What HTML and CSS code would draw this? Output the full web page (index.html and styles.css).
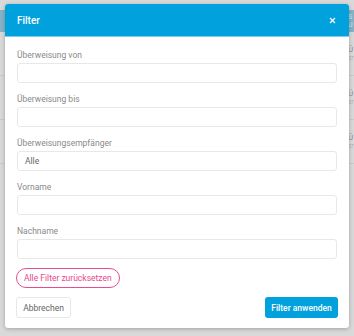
FILE: index.html
```html
<!DOCTYPE html>
<html lang="de">
<head>
<meta charset="utf-8">
<title>Filter</title>
<link rel="stylesheet" href="styles.css">
</head>
<body>
<div class="page">
  <div class="band"><span class="band-text">S<br>U</span></div>
  <div class="row"><span class="row-title">Ü</span><span class="row-sub">07</span></div>
  <div class="row"><span class="row-title">Ü</span><span class="row-sub">07</span></div>
  <div class="row"><span class="row-title">Ü</span><span class="row-sub">07</span></div>
</div>
<div class="modal">
  <div class="modal-header">
    <span class="modal-title">Filter</span>
    <svg class="close" width="7" height="7" viewBox="0 0 7 7"><path d="M1 1L6 6M6 1L1 6" stroke="#fff" stroke-width="1.2" fill="none"/></svg>
  </div>
  <div class="modal-body">
    <div class="field"><label class="label">Überweisung von</label><div class="input"></div></div>
    <div class="field"><label class="label">Überweisung bis</label><div class="input"></div></div>
    <div class="field"><label class="label">Überweisungsempfänger</label><div class="input">Alle</div></div>
    <div class="field"><label class="label">Vorname</label><div class="input"></div></div>
    <div class="field"><label class="label">Nachname</label><div class="input"></div></div>
    <button class="reset">Alle Filter zurücksetzen</button>
    <div class="footer">
      <button class="btn-cancel">Abbrechen</button>
      <button class="btn-apply">Filter anwenden</button>
    </div>
  </div>
</div>
</body>
</html>
```
FILE: styles.css
```css
html, body { margin: 0; padding: 0; }
body {
  width: 354px;
  height: 336px;
  overflow: hidden;
  background: #d9d9d9;
  font-family: Roboto, "Noto Sans", sans-serif;
  position: relative;
}
.page { padding-top: 10px; }
.band {
  height: 22px;
  background: #86b3c8;
  padding-left: 348px;
  box-sizing: border-box;
}
.band-text {
  display: block;
  font-size: 7px;
  line-height: 8px;
  color: #d6e6ee;
  padding-top: 3px;
  white-space: nowrap;
}
.row {
  height: 44px;
  border-bottom: 1px solid #cbcbcb;
  padding-left: 348px;
  padding-top: 13px;
  box-sizing: border-box;
  display: flex;
  flex-direction: column;
  white-space: nowrap;
}
.row-title { font-size: 8px; line-height: 9px; color: #8d8d8d; }
.row-sub { font-size: 5px; line-height: 8px; color: #a9a9a9; }

.modal {
  position: absolute;
  left: 5px;
  top: 4px;
  width: 344px;
  height: 324px;
  background: #fff;
  border-radius: 3px;
  box-shadow: 0 1px 4px rgba(0,0,0,0.25);
  overflow: hidden;
}
.modal-header {
  height: 33px;
  background: #00a1dd;
  display: flex;
  align-items: center;
  justify-content: space-between;
  padding: 0 12px 0 12px;
  box-sizing: border-box;
  border-bottom: 1px solid #7fd0ee;
}
.modal-title {
  color: #fff;
  font-size: 10px;
  font-weight: 500;
  padding-top: 1px;
}
.close { margin-right: 1px; margin-top: 1px; }
.modal-body {
  padding: 12px 12px 10px 12px;
}
.field { margin-bottom: 10px; }
.label {
  display: block;
  font-size: 8.5px;
  line-height: 12px;
  color: #8a8a8a;
  margin-bottom: 2px;
}
.input {
  height: 20px;
  border: 1px solid #e8e8e8;
  border-radius: 3px;
  box-sizing: border-box;
  font-size: 8.5px;
  line-height: 18px;
  color: #666;
  padding-left: 7px;
}
.reset {
  display: block;
  margin: -1px 0 0 -1px;
  height: 20px;
  padding: 0 7px;
  border: 1px solid #ea4b8f;
  border-radius: 10px;
  background: #fff;
  color: #e8468c;
  font-family: inherit;
  font-size: 8.5px;
  line-height: 18px;
}
.footer {
  display: flex;
  justify-content: space-between;
  margin-top: 9px;
}
.btn-cancel {
  height: 21px;
  width: 55px;
  padding: 0;
  margin-left: -1px;
  border: 1px solid #e8e8e8;
  border-radius: 3px;
  background: #fff;
  color: #666;
  font-family: inherit;
  font-size: 8.5px;
}
.btn-apply {
  height: 21px;
  width: 73px;
  padding: 0;
  margin-right: -1px;
  border: none;
  border-radius: 3px;
  background: #00a1dd;
  color: #fff;
  font-family: inherit;
  font-size: 8.5px;
  font-weight: 500;
}
```
